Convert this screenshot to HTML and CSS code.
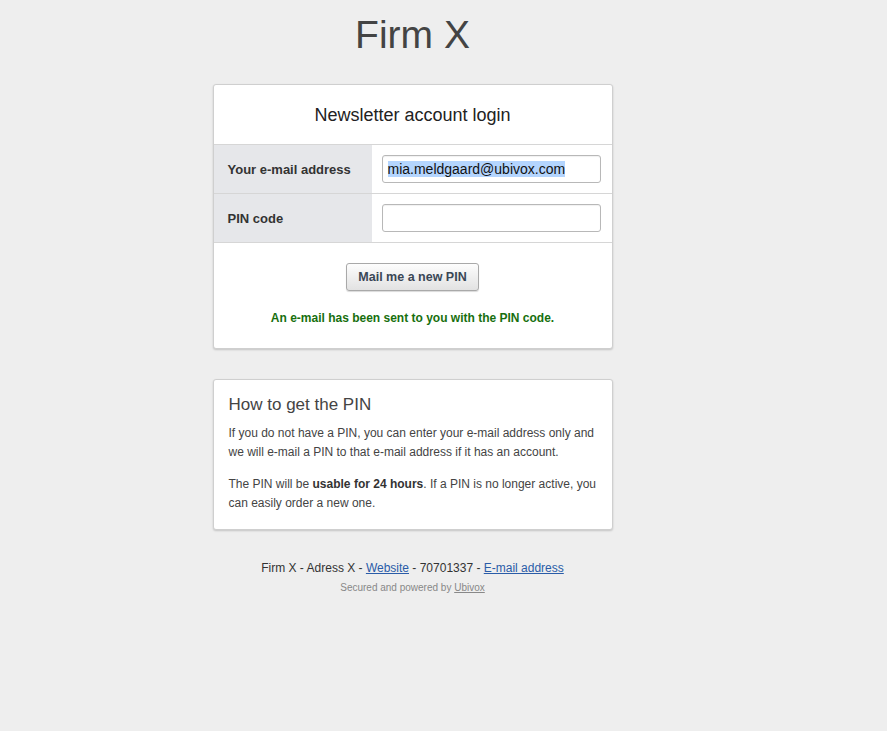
FILE: index.html
```html
<!DOCTYPE html>
<html lang="en">
<head>
    <meta charset="UTF-8">
    <meta name="viewport" content="width=device-width, initial-scale=1.0">
    <title>Firm X - Newsletter login</title>
    <link rel="stylesheet" href="styles.css">
</head>
<body>
    <div class="page">
        <h1 class="firm">Firm X</h1>

        <div class="card login">
            <h2 class="card-title">Newsletter account login</h2>
            <div class="row">
                <label class="row-label" for="email">Your e-mail address</label>
                <div class="row-field">
                    <div class="input" id="email"><span class="selected">mia.meldgaard@ubivox.com</span></div>
                </div>
            </div>
            <div class="row">
                <label class="row-label" for="pin">PIN code</label>
                <div class="row-field">
                    <div class="input" id="pin"></div>
                </div>
            </div>
            <div class="actions">
                <button class="btn">Mail me a new PIN</button>
                <p class="notice">An e-mail has been sent to you with the PIN code.</p>
            </div>
        </div>

        <div class="card help">
            <h3>How to get the PIN</h3>
            <p>If you do not have a PIN, you can enter your e-mail address only and we will e-mail a PIN to that e-mail address if it has an account.</p>
            <p>The PIN will be <strong>usable for 24 hours</strong>. If a PIN is no longer active, you can easily order a new one.</p>
        </div>

        <div class="footer">
            <p class="contact">Firm X - Adress X - <a href="#">Website</a> - 70701337 - <a href="#">E-mail address</a></p>
            <p class="powered">Secured and powered by <a href="#">Ubivox</a></p>
        </div>
    </div>
</body>
</html>
```

FILE: styles.css
```css
body {
    font-family: "Liberation Sans", Arial, sans-serif;
    margin: 0;
    padding: 0;
    background-color: #eeeeee;
    color: #333;
}
.page {
    width: 825px;
}
.firm {
    margin: 12px 0 0;
    height: 72px;
    text-align: center;
    font-size: 39px;
    font-weight: normal;
    color: #444;
    line-height: 46px;
}
.card {
    width: 398px;
    margin: 0 auto;
    background-color: #fff;
    border: 1px solid #cfcfcf;
    border-radius: 3px;
    box-shadow: 0 1px 2px rgba(0, 0, 0, 0.18);
}
.card-title {
    margin: 0;
    height: 59px;
    line-height: 60px;
    text-align: center;
    font-size: 18px;
    font-weight: normal;
    color: #222;
    border-bottom: 1px solid #d6d6d6;
}
.row {
    display: flex;
    height: 48px;
    border-bottom: 1px solid #d6d6d6;
}
.row-label {
    width: 144px;
    padding-left: 14px;
    background-color: #e6e7ea;
    font-size: 13px;
    font-weight: bold;
    color: #333;
    line-height: 50px;
}
.row-field {
    flex: 1;
    padding: 10px 11px 0 10px;
}
.input {
    height: 26px;
    border: 1px solid #b8b8b8;
    border-radius: 3px;
    box-shadow: inset 0 1px 1px rgba(0, 0, 0, 0.06);
    padding: 0 5px;
    font-size: 14px;
    line-height: 27px;
    color: #111;
}
.selected {
    background-color: #b4d5fe;
}
.actions {
    text-align: center;
    padding: 20px 0 23px;
}
.btn {
    font-family: "Liberation Sans", Arial, sans-serif;
    width: 133px;
    height: 28px;
    font-size: 12.5px;
    font-weight: bold;
    color: #3a4756;
    background: linear-gradient(#fdfdfd, #e2e2e2);
    border: 1px solid #a9a9a9;
    border-radius: 3px;
    box-shadow: 0 1px 1px rgba(0, 0, 0, 0.15);
}
.notice {
    margin: 20px 0 0;
    font-size: 12px;
    font-weight: bold;
    color: #176f0e;
}
.help {
    margin-top: 30px;
    width: 368px;
    padding: 15px 15px 16px;
}
.help h3 {
    margin: 0 0 9px;
    font-size: 17px;
    font-weight: normal;
    color: #444;
}
.help p {
    margin: 0 0 13px;
    font-size: 12px;
    line-height: 19px;
    color: #444;
}
.help p:last-child {
    margin-bottom: 0;
}
.help strong {
    color: #333;
}
.footer {
    text-align: center;
    padding-top: 31px;
}
.contact {
    margin: 0;
    font-size: 12px;
    color: #333;
}
.contact a {
    color: #2a5ca8;
}
.powered {
    margin: 7px 0 0;
    font-size: 10px;
    color: #888;
}
.powered a {
    color: #888;
}
```
